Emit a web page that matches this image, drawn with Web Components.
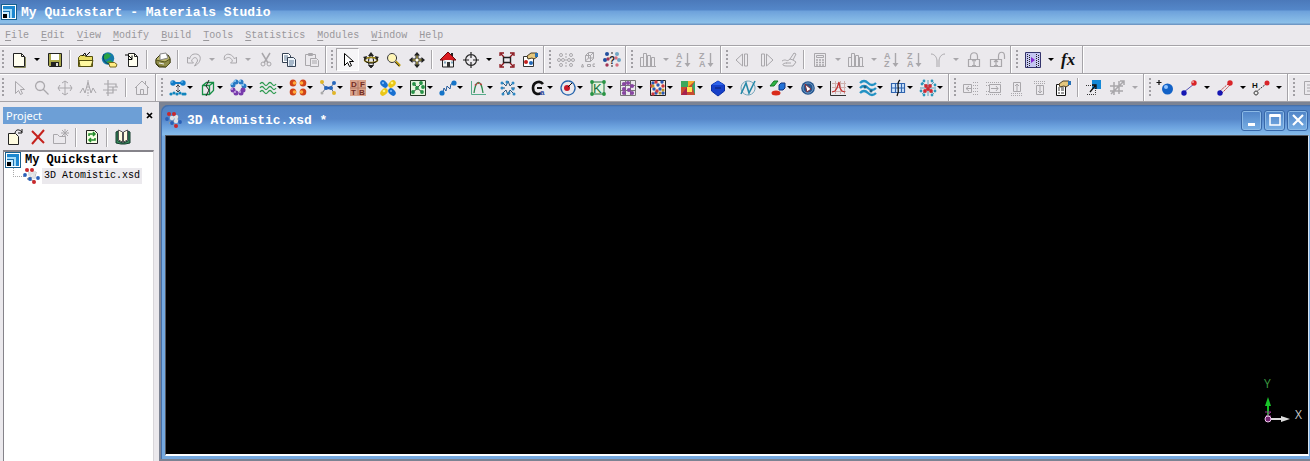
<!DOCTYPE html>
<html lang="en">
<head>
<meta charset="utf-8">
<title>My Quickstart - Materials Studio</title>
<style>
html,body{margin:0;height:100%}
body{background:#ebe9ed;font-family:"Liberation Mono",monospace;font-size:10px;overflow:hidden}
</style>
</head>
<body>
<studio-app></studio-app>
<script>
const dot=(x,y,r,c)=>`<circle cx="${x}" cy="${y}" r="${r}" fill="${c}"/>`;
const dots=(pts,r,c)=>pts.map(p=>dot(p[0],p[1],r,c)).join('');
const line=(d,c='#000',w=1,x='')=>`<path d="${d}" fill="none" stroke="${c}" stroke-width="${w}" ${x}/>`;
const fill=(d,c,s='none')=>`<path d="${d}" fill="${c}" stroke="${s}"/>`;
const letter=(t,x,y,size,c,style='font-weight:bold')=>`<text x="${x}" y="${y}" fill="${c}" style="font-family:'Liberation Sans',sans-serif;font-size:${size}px;${style}">${t}</text>`;
const G='#a9a7ab';
const pageShape='M2.5 1.5h8l3 3v10h-11z';
const icons={
 logo:fill('M0 0h16v16H0z','#17608f')+fill('M1 1h14v14H1z','#fff')+fill('M2 2h12v12H2z','#1d87cf')+fill('M2 5h9v9H9V7H2z','#a5dcf8')+fill('M2 7h7v7H2z','#1b6fae')+fill('M2 8h6v6H2z','#cceeff')+fill('M2 10h4v4H2z','#000'),
 page:fill(pageShape,'#fffef0','#222')+line('M10.5 1.5v3h3','#222')+line('M3 15.5h11.5V5','#8a8a60'),
 save:fill('M1.5 1.5h13v13h-12l-1-1z','#aaa84c','#222')+fill('M4 2h8v6H4z','#fff')+fill('M4 10h8v4H4z','#222')+fill('M9 11h2v3H9z','#ddd'),
 folder:fill('M.5 5.5l2-2h4l1 1h7v10h-14z','#e9dd62','#55500f')+fill('M1 8.5h14l-2 6H2z','#fff8a0','#55500f')+line('M4 4l3-3 1 3 4-4','#111'),
 globe:dot(7,6.5,6.2,'#157aa9')+fill('M2 4l4-3 4 2-2 3-4 2z','#29a343')+fill('M5 10l4-2 3 2-5 2z','#29a343')+fill('M7.500 10.500h6l2.500 2-1 2.500h-6z','#ffec83','#76681d')+line('M3 2a7 7 0 0 0 5 10','#073c62'),
 import:fill('M4.500 1.500h6l3 3v10h-9z','#fffef0','#222')+line('M1 3h3l4 4M8 3.500v4H4','#000')+line('M10.500 1.500v3h3','#222'),
 print:fill('M1 7l4-4h8l2 3v5l-4 4H4l-3-3z','#bbb66a','#33320e')+fill('M5 2l6-1 2 5-8 2z','#fff','#888')+fill('M1 8l9 2 5-3v4l-4 4-7-1-3-3z','#918e4b','#55531f')+line('M4 11l5 1','#eee'),
 undo:line('M1.500 5v6h6l-2-2c2-5 6-4 6 0l-3 5c7-3 8-12 1-12-4 0-5 2-6 5z',G),
 redo:line('M14.500 5v6h-6l2-2c-2-5-6-4-8-1-2-7 7-8 10-1z',G),
 cut:line('M4 1l6 10M12 1L6 11M8 7l1 2',G,1.500)+line('M5 10a2 2 0 1 0 0 4 2 2 0 0 0 0-4M11 10a2 2 0 1 0 0 4 2 2 0 0 0 0-4',G),
 copy:fill('M1.500 1.500h6l2 2v7h-8z','#fff','#344153')+line('M3 4h4M3 6h4M3 8h4','#5e7995')+fill('M6.500 5.500h6l2 2v7h-8z','#eef5fc','#344153')+line('M8 9h5M8 11h5M8 13h4','#5e7995'),
 paste:line('M7 13.500H1.500v-11h10V6M4.500 3.500v-2h4v2zM6.500 6.500h6l2 2v6h-8zM8 9h5M8 11h5',G),
 pointer:fill('M4.500 1.500v12l3-3 2 4 2-1-2-4h4z','#fff','#000'),
 pointerOff:line('M4.500 1.500v12l3-3 2 4 2-1-2-4h4z',G),
 rotate:line('M8 3.500a2.500 6 0 1 0 .1 0','#111')+line('M8 5.500a6.500 2.500 0 1 0 .1 0','#9b8510',1.500)+line('M2 5.500c-2 3 2 6 6 5.500M14 5.500c2 3-2 6-6 5.500','#111')+fill('M8 0l3 4H5zM0 5l4-1-1 4zM16 5l-4-1 1 4zM8 16l3-3H5z','#222'),
 zoom:dot(6,6,4,'#fff5b5')+line('M6 1.500a4.500 4.500 0 1 0 .1 0','#333')+line('M9.500 9.500l4.500 4.500','#b9990b',2.500)+line('M9 10l4 4','#333'),
 zoomOff:line('M6 1.500a4.500 4.500 0 1 0 .1 0M9.500 9.500l5 5',G,1.300),
 move:line('M8 2v12M2 8h12','#222',3)+line('M8 3v10M3 8h10','#e5d25b',1)+fill('M8 0l3 3.500H5zM8 16l3-3.500H5zM0 8l3.500-3v6zM16 8l-3.500-3v6z','#222')+dot(8,8,1.500,'#fff'),
 moveOff:line('M8 1v14M1 8h14M5 3l3-2 3 2M5 13l3 2 3-2M3 5L1 8l2 3M13 5l2 3-2 3',G),
 home:fill('M2.500 7L8 2l5.500 5v8h-11z','#f2f2f2','#222')+fill('M11 1h2v5h-2z','#222')+fill('M0 8l8-8 8 8H13L8 7 3 8z','#dc1a20','#6a080c')+fill('M3 6h10v2H3z','#d51a20')+fill('M7 10h3v5H7z','#333')+fill('M4 9.500h2v2H4zM11 9.500h2v2h-2z','#7fa4bb'),
 homeOff:line('M1 8l7-7 7 7M2.500 7v7.500h11V7M6.500 14V9.500h3V14M11.500 1v4',G),
 target:line('M8 2.500a5.500 5.500 0 1 0 .1 0M8 0v6M8 10v6M0 8h6M10 8h6','#222',1.200),
 fit:line('M4.500 5.500h7v5h-7z','#222',1.400)+line('M1 4V1h4M11 1h4v3M15 12v3h-4M5 15H1v-3M2 2l3 3M14 2l-3 3M2 14l3-3M14 14l-3-3','#8b151b',1.300),
 display:fill('M1.500 4.500h10v10h-10z','#fff','#333')+fill('M5 4l4-3h6v4l-3 2-2-1-4 1z','#e5c77d','#4b3d25')+fill('M13 1h3v4h-3z','#2670b5')+dot(4,10,2,'#c3221e')+dot(9,11,2,'#2368b7'),
 props:fill('M1.500 4.500h9v11h-9z','#fff','#111')+line('M3 8h2M6 8h3M3 10h2M6 10h3M3 13h2M6 13h3','#333')+fill('M4 4l4-3h6v4l-3 2-2-1-4 1z','#e5c77d','#4b3d25')+fill('M13 1h3v4h-3z','#2670b5'),
 symOff:line('M8 1v14',G,1,'stroke-dasharray="2 1"')+[[3,3],[3,13],[13,3],[13,13],[1,8],[5,8],[11,8],[15,8]].map(p=>`<circle cx="${p[0]}" cy="${p[1]}" r="1.500" fill="none" stroke="${G}"/>`).join(''),
 cubeOff:line('M4.500 3.500l3-3h5v6l-3 3h-5zM4.500 3.500h5v6M9.500 3.500l3-3M7.500 1v5h5M7.500 6l-3 3',G)+line('M1.500 12l1 3h-2zM6.500 12.500h3v2h-3zM14 12h-2v2.500h2',G),
 symHelp:line('M8 0v3M8 13v3','#222',1,'stroke-dasharray="2 1"')+letter('?',5,12,10,'#222')+dots([[3,2],[1,8]],2,'#204e9d')+dots([[3,13],[4,7]],1.700,'#a23555')+dots([[13,2],[15,8]],2,'#70a6c5')+dots([[13,13],[12,6]],1.700,'#d66e7c'),
 chartOff:line('M.5 14.500v-9h3v9M3.500 6V1.500h3v13M7.500 14V3.500h3v11M11.500 14V5.500h3v9M0 14.500h16',G),
 azOff:letter('A',0,7,9,G)+letter('Z',0,15,9,G)+line('M11.500 1v13',G,1.400)+fill('M8.500 11h6l-3 4z',G),
 zaOff:letter('Z',0,7,9,G)+letter('A',0,15,9,G)+line('M11.500 1v13',G,1.400)+fill('M8.500 11h6l-3 4z',G),
 prevOff:line('M7.500 2v12L1 8zM9.500 2v12h3V2z',G),
 nextOff:line('M3.500 2v12h3V2zM8.500 2v12L15 8z',G),
 handOff:line('M1 9c5-3 4 2 8-2l4-6 2 1-3 6 3 2-3 4H6c-6 0-5-3 0-3M9 7l3 1M5 11h5',G),
 calcOff:line('M2.500 1.500h11v13h-11zM4.500 3.500h7v2h-7z',G)+line('M4 8h8M4 10.500h8M4 13h8',G,1.500,'stroke-dasharray="2 1"'),
 yOff:line('M1 2c4 0 6 4 6 7v6M15 2c-4 0-6 4-6 7v6',G),
 lockOff:line('M4.500 7V4.500c0-5 7-5 7 0V7M2.500 7.500h11v7h-11zM6 9l2-1 2 1M8 9v5M6 13.500h4',G,1.200),
 unlockOff:line('M9.500 7V4c0-5 6-5 6 0v3M1.500 7.500h11v7h-11zM5 10l2-2 2 2M7 9v5M5 13.500h4',G,1.200),
 movie:fill('M.5 .5h15v15H.5z','#c4c6f2','#34346c')+line('M2.500 2v13M4.500 3v12M11.500 2v13M13.500 3v12','#222',1,'stroke-dasharray="1 1"')+fill('M6 5l4 3-4 3z','#8127d0'),
 fx:letter('fx',0,13,17,'#111','font-family:\'Liberation Serif\',serif;font-style:italic;font-weight:bold'),
 leftOff:line('M.5 4.500h8v8h-8zM9 8.500H3M6 6L3 8.500 6 11',G)+line('M10 2.500h6M10 5.500h6M10 8.500h6M10 11.500h6M10 14.500h6',G,1,'stroke-dasharray="1 1"'),
 rightOff:line('M3.500 4.500h11v8h-11zM5 8.500h7M10 6l2 2.500-2 2.500',G)+line('M0 2.500h16M0 14.500h16M0 5.500h3M0 11.500h3',G,1,'stroke-dasharray="1 1"'),
 upOff:line('M4.500 2.500h7v9h-7zM8 11V4M6 6l2-2 2 2',G)+line('M2 13.500h12M2 15.500h12',G,1,'stroke-dasharray="1 1"'),
 downOff:line('M4.500 5.500h7v9h-7zM8 6v7M6 11l2 2 2-2',G)+line('M2 1.500h12M2 3.500h12',G,1,'stroke-dasharray="1 1"'),
 spikeOff:line('M0 13l3-5 2 5 3-11 3 11 2-5 3 5',G)+line('M8 0v16',G,1,'stroke-dasharray="2 1"'),
 alignOff:line('M5 0v16M1 4h12v3H5M0 10h14M3 13h7V7h5',G,1.200),
 scale:fill('M6 0h9v9H6z','#1488d7')+line('M0 5.500h9.500v9H0','#333',1,'stroke-dasharray="1 1"')+line('M4 12l5-6M6 5h4v4','#111',1.300),
 netOff:line('M5 2v13M10 1v13M1 6h13M1 11h13M2 14L15 1M11 1h4v4',G,1.500),
 atomAdd:dot(9.500,9,5.500,'#1262c7')+dot(8,7,2,'#93c4ff')+line('M1 0v5M-1.500 2.500h5','#111',1.200),
 bond:line('M3 12L13 4','#5754b7')+dot(13,3,2.700,'#d92529')+dot(3,13,2.700,'#1617b3')+dot(12,2,.8,'#fff'),
 bond2:line('M3 11L11 4M5 13l8-8','#bc3b3b',1,'stroke-dasharray="2 1"')+dot(13,3,2.700,'#d92529')+dot(3,13,2.700,'#1617b3'),
 bondH:line('M3 12L13 4','#333',1,'stroke-dasharray="2 1"')+letter('H',-1,8,8,'#111')+dot(14,3,2.500,'#d92529')+dot(3,13,2,'#eee')+line('M3 11a2 2 0 1 0 .1 0','#333'),
 listOff:line('M2.500 1.500h10v13h-10zM5 5h6M5 8h6M5 11h6',G),
 link:line('M3 3h10','#127bc7',2)+line('M8 4v8','#686878')+line('M6 7l2-2 2 2M6 10l2 2 2-2','#444')+dots([[3,3],[13,3]],2.700,'#127bc7')+dots([[1,14],[4,13],[7,14],[10,13],[13,14],[15,14]],1.600,'#1385bd')+dots([[2,2],[12,2]],.7,'#a3e0ff'),
 cell:line('M2.500 5.500l4-3h7v8l-4 4h-7zM2.500 5.500h7v9M9.500 5.500l4-3','#168e45',1.300)+line('M9 0L6 6l3 4-3 6','#222'),
 ring:dots([[3,5],[6,2],[11,2],[14,6]],2.500,'#2879c4')+dots([[3,10],[6,13],[11,13],[13,10]],2.500,'#783bac')+dots([[2,4],[5,1],[10,1],[13,5]],.9,'#a3e0ff')+dots([[2,9],[5,12],[10,12]],.9,'#d9b8f2'),
 waves:[4,8,12].map(y=>line(`M0 ${y}q2-3 4 0t4 0 4 0 4 0`,'#2e9a50',1.300)).join(''),
 lobes:[[3,3],[3,12],[13,3],[13,12]].map(p=>`<ellipse cx="${p[0]}" cy="${p[1]}" rx="3.300" ry="3.600" fill="#cf4218"/>`).join('')+dots([[4.5,3],[4.5,12],[11.500,3],[11.500,12]],1.800,'#ffac3c'),
 chain:line('M2 3l4 5M11 7l3-4M6 8l-4 5M11 8l3 5','#6b7180')+line('M5 8h6','#2352a8',2.500)+dots([[2,2],[14,13]],2,'#e1b528')+dots([[6,8],[11,8],[14,3]],2,'#2566bb')+dot(2,13,1.500,'#aaa'),
 dftb:fill('M0 0h16v16H0z','#d9a38b')+line('M8 1v14M0 8h16','#b37a66')+letter('D',1,7,8,'#722d25')+letter('F',10,7,8,'#722d25')+letter('T',1,15,8,'#722d25')+letter('B',9,15,8,'#722d25'),
 lobes2:[[4,4,'#1970d1',45],[12,12,'#1970d1',45],[12,4,'#ebc617',-45],[4,12,'#ebc617',-45]].map(p=>`<ellipse cx="${p[0]}" cy="${p[1]}" rx="4.300" ry="3" fill="${p[2]}" transform="rotate(${p[3]} ${p[0]} ${p[1]})"/>`).join('')+dots([[12,3],[4,11]],1.300,'#fff47d')+dots([[3,3],[11,11]],1,'#86c2ff'),
 greenbox:fill('M.5 .5h15v15H.5z','#e6f4df','#263b27')+line('M4 4l4 4-5 4M12 3l-5 5 5 4','#444')+dots([[4,4],[11,3],[7,8],[3,12],[12,12],[13,7]],1.900,'#269347'),
 zig:line('M3 12l1-4 2 3 1-5 3 3 1-5 3-1','#245b9c')+dots([[2,13],[14,3]],2.600,'#1574c8'),
 curve:line('M1.500 1v13.500H16','#55aa8a')+line('M4 13c2-14 7-14 9 0','#2b8b4c',1.300)+line('M5 5.500c2-3 5-3 7 0','#c34040',1.500,'stroke-dasharray="2 1"'),
 bluegrid:line('M2 2l4 4 2-5 2 5 4-4M2 14l4-4 2 5 2-5 4 4M1 8h4M11 8h4','#27547b')+dots([[2,3],[7,2],[13,3],[2,8],[13,9],[3,14],[9,13],[14,14]],1.500,'#2d87c3'),
 g:line('M13 4c-3-4-10-2-10 4s5 7 8 5','#111',2.600)+line('M7 8h5','#111',2)+letter('a',10,15,8,'#324ba1'),
 orbit:line('M8 1a7 7 0 1 0 .1 0','#2765ad',1.300)+dot(7,8,3,'#c71828')+line('M8 7l4-4','#111'),
 k:fill('M2 2h12v12H2z','#e4f4df','#23773e')+letter('K',3,13,13,'#16723b','')+dots([[2,2],[14,2],[2,14],[14,14]],1.900,'#279443'),
 purple:line('M.5 .5h15v15H.5zM5.500 1v14M10.500 1v14M1 5.500h14M1 10.500h14','#777')+dots([[4,4],[8,3],[12,6],[4,9],[9,10],[4,13],[12,13]],2.100,'#8846a2'),
 mosaic:fill('M.5 .5h15v15H.5z','#f8eadf','#222')+dots([[3,3],[8,5],[12,2],[4,9],[10,9],[13,13],[6,13]],1.700,'#285ab6')+dots([[6,2],[13,6],[7,11],[3,14],[1.500,6]],1.700,'#c9383f')+dots([[3,6],[10,13],[13,10]],1.500,'#b99328'),
 prism:fill('M1 1h14v14H1z','#c84b31')+fill('M1 1h7v6H1z','#3ca85d')+fill('M8 1h7L8 7z','#f4b02d')+fill('M7 7h5v5H7z','#ffe352')+fill('M1 15l6-8v8z','#a6224d')+fill('M12 6l3-5v14z','#36a96d'),
 poly:fill('M8 1l6.500 4v6L8 16l-6.500-5V5z','#1740c9','#0a2fa5')+fill('M8 1l6 4H2z','#2d62ea')+line('M5 8h6','#102b8b',1.500),
 n:line('M8 1a7 7 0 1 0 .1 0','#72a5bb')+line('M1 14l5-11 3 10 6-12','#2588a8',1.600),
 shapes:fill('M0 6l4-5h4L4 6z','#2fb744','#167628')+fill('M9 5l2-2h4v5l-2 2H9z','#2372d7','#14347e')+'<ellipse cx="6" cy="13" rx="4.500" ry="2.500" fill="#d92b1b"/>',
 compass:dot(8,8,6.800,'#25558e')+line('M8 3a5 5 0 1 0 .1 0','#7da5cd')+fill('M5 4l6 5-4 3z','#fff','#802b34'),
 peak:line('M2 3.500h14M2 7.500h14M2 11.500h14M5.500 1v13M10.500 1v13M14.500 1v13','#ceb1ae')+line('M.5 1v14.500h15.500','#333')+line('M2 12l3-1 2-3 2-6 1 6 2 3 3 1','#c33030',1.300),
 streams:[3,8,13].map(y=>line(`M0 ${y}q4-4 8 0t8 0`,'#2392c4',2.300)).join('')+dots([[5,7],[11,11]],1.500,'#206080'),
 grid:fill('M1 3h14v10H1z','#d3e8ff')+line('M1.500 3.500h13v9h-13zM5.500 3v10M11.500 3v10M1 8h14','#3164ae',1.200)+line('M10 0c-5 4 1 8-3 16','#111',1.300),
 burst:line('M2 2l12 12M14 2L2 14M8 0v16M0 8h16','#5aa3bd')+dots([[2,4],[4,1],[12,1],[15,5],[1,11],[4,15],[12,15],[15,11]],1.400,'#2a97bb')+dots([[6,6],[10,6],[8,9],[5,11],[11,11]],1.900,'#cf2932'),
 del:line('M2 2l12 12M14 1L2 15','#c5221d',2),
 newPage:fill('M1.500 4.500h7l3 3v8h-10z','#fffce0','#222')+line('M8 4c1-4 4-4 7-1M15 0v4h-4','#111'),
 folderOff:line('M.5 5.500h4l2 2h6v7H.5zM12 0v8M8 4h8M9 1l6 6M15 1L9 7',G),
 refresh:fill(pageShape,'#f4ffe4','#222')+line('M5 7V5h5M9 3l2 2-2 2M11 9v2H6M7 9l-2 2 2 2','#218c29',1.500),
 book:fill('M1 3l2-1v10l5 2 5-2V2l2 1v11l-5 1H6l-5-1z','#358a5c','#173b2d')+fill('M3.500 1l4 2v10l-4-2z','#fffde0','#555')+fill('M12.500 1l-4 2v10l4-2z','#fffde0','#555'),
 molecule:line('M2 2l5 4 5-2-1 6-5-1-3 2 8 2','#999')+dots([[6,6],[10,5],[10,9]],2.200,'#dfe1e4')+dots([[3,2],[8,2],[10,14]],2,'#c9282c')+dots([[1,7],[14,10],[6,11]],1.900,'#2a60b8'),
 min:fill('M4 11h7v3H4z','#fff'),
 max:line('M3 3.500h10v9.500H3z','#fff',1.500)+line('M2.500 3.500h11','#fff',3),
 close:line('M3 3l10 10M13 3L3 13','#fff',2.200)
};
const define=(name,markup,setup)=>customElements.define(name,class extends HTMLElement{
  connectedCallback(){
    if(this.shadowRoot)return;
    const t=document.createElement('template');
    t.innerHTML=markup;
    const content=t.content.cloneNode(true);
    if(setup)setup(this,content);
    this.attachShadow({mode:'open'}).append(content);
  }
});
define('ms-icon',`<style>:host{display:block;width:16px;height:16px}svg{display:block;width:16px;height:16px;margin:auto;overflow:visible}</style><svg viewBox="0 0 16 16" aria-hidden="true"></svg>`,
 (el,r)=>{r.querySelector('svg').innerHTML=icons[el.getAttribute('name')]||''});
define('tool-button',`<style>
:host{display:block;flex:none;width:23px}
button{box-sizing:border-box;width:100%;height:23px;padding:0;border:1px solid transparent;background:none;display:flex;align-items:center;justify-content:center}
:host([pressed]) button{border-color:#aaa8ac #fff #fff #aaa8ac;background:#f6f5f7}
:host([menu]){width:30px}
:host([menu]) button{justify-content:flex-start;padding-left:2px}
i{display:none;border:3px solid transparent;border-top-color:#000;border-bottom:0}
:host([menu]) i{display:block}
ms-icon{flex:none}
:host([menu]) ms-icon{width:18px}
</style><button><ms-icon></ms-icon><i></i></button>`,(el,r)=>{
 const n=el.getAttribute('name'),b=r.querySelector('button');
 r.querySelector('ms-icon').setAttribute('name',n);
 b.setAttribute('aria-label',n.replace('Off',''));
 if(n.endsWith('Off')||n=='undo'||n=='redo'||n=='cut'||n=='paste')b.disabled=true;
});
define('drop-arrow',`<style>:host{display:block;flex:none;width:13px}button{display:flex;align-items:center;justify-content:center;width:100%;height:23px;padding:0;border:0;background:none}i{border:3px solid transparent;border-top-color:#000;border-bottom:0}:host([off]) i{border-top-color:#a9a7ab}</style><button aria-label="More options"><i></i></button>`);
define('tool-separator',`<style>:host{display:block;flex:none;box-sizing:border-box;width:8px;height:19px;padding:0 3px}i{display:block;height:100%;width:1px;background:#a9a7ab;box-shadow:1px 0 #fff}</style><i></i>`);
define('tool-group',`<style>
:host{display:flex;flex:none;align-items:center;height:27px;padding-right:2px;border-right:1px solid #a5a3a8;box-shadow:1px 0 #fff;margin-right:1px}
.grip{flex:none;width:9px;height:19px;background:repeating-linear-gradient(#a19fa4 0 2px,transparent 2px 4px) 4px 0/2px 100% no-repeat}
:host([first]) .grip{width:7px;background-position:2px 0}
</style><span class="grip"></span><slot></slot>`);
define('tool-row',`<style>:host{display:flex;overflow:hidden;border-top:1px solid #a5a3a8;height:27px;background:linear-gradient(#fff,#fff) 0 0/100% 1px no-repeat}</style><slot></slot>`);
define('title-bar',`<style>
:host{display:flex;align-items:center;gap:4px;box-sizing:border-box;height:25px;padding:0 0 1px 1px;color:#fff;font-weight:bold;font-size:13px;line-height:16px;background:linear-gradient(#4b79ba 0,#5487c9 10px,#6da1db 11px,#8cc0e9 23px,#6f98c5 24px,#6f98c5)}
h1{margin:0;padding-top:1px;font:inherit;white-space:pre}
</style><ms-icon name="logo"></ms-icon><h1><slot></slot></h1>`);
define('menu-bar',`<style>
nav{display:flex;gap:12px;height:20px;align-items:center;padding:2px 0 0 5px;box-sizing:border-box}
button{font:inherit;color:#99979b;padding:0;border:0;background:none;line-height:12px}
u{text-underline-offset:2px}
</style><nav></nav>`,(el,r)=>{
 r.querySelector('nav').innerHTML='File Edit View Modify Build Tools Statistics Modules Window Help'.split(' ').map(w=>`<button><u>${w[0]}</u>${w.slice(1)}</button>`).join('');
});
define('project-panel',`<style>
:host{display:flex;flex-direction:column;flex:none;box-sizing:border-box;width:159px;padding:5px 4px 0 3px}
header{display:flex;align-items:center;gap:2px}
h2{flex:1;margin:0;padding-left:3px;font:11px/17px "Noto Sans",sans-serif;color:#fff;background:#6d9fd6}
header button{flex:none;width:11px;height:16px;padding:0;border:0;background:none}
svg{display:block;margin:auto}
.tools{display:flex;align-items:center;height:26px}
ul{list-style:none;box-sizing:border-box;flex:1;margin:0 1px 0 0;padding:0 0 0 1px;background:#fff;border:solid #85838a;border-width:2px 1px 0 1px;border-right-color:#d8d6da}
ul ul{border:0;padding:0 0 0 8px;margin:0}
.node{display:flex;align-items:center;height:16px}
.root{gap:4px;font-size:12px;font-weight:bold}
.branch{flex:none;width:10px;height:8px;align-self:flex-start;border:dotted #aaa;border-width:0 0 1px 1px}
.label{background:#ebe9ed;line-height:16px;padding:0 2px;margin-left:2px}
</style><header><h2>Project</h2><button aria-label="Close"><svg width="8" height="8" viewBox="0 0 8 8"><path d="M1 1l5 5M6 1L1 6" stroke="#000" stroke-width="1.700"/></svg></button></header>
<div class="tools"><tool-button name="newPage"></tool-button><tool-button name="del"></tool-button><tool-button name="folderOff"></tool-button><tool-separator></tool-separator><tool-button name="refresh"></tool-button><tool-separator></tool-separator><tool-button name="book"></tool-button></div>
<ul><li><div class="node root"><ms-icon name="logo"></ms-icon><span>My Quickstart</span></div><ul><li class="node"><i class="branch"></i><ms-icon name="molecule"></ms-icon><span class="label">3D Atomistic.xsd</span></li></ul></li></ul>`);
define('document-window',`<style>
:host{display:flex;flex-direction:column;flex:1;min-width:0;box-sizing:border-box;border:solid #7c8393;border-width:3px 0 2px 2px;background:#7c8393}
.frame{display:flex;flex-direction:column;flex:1;box-sizing:border-box;padding:0 0 3px 4px;border-radius:7px 0 0 0;background:linear-gradient(#3f6db1,#5384c5 2px,#5687ca 14px,#6da3df 22px,#86bcea 30px,#74a8df 31px);box-shadow:inset 1px 1px #4670aa}
header{display:flex;align-items:center;gap:5px;height:30px;padding:0 2px 0 1px;color:#fff;font-weight:bold;font-size:13px}
h2{font:inherit;line-height:16px;margin:0;padding-top:2px;flex:1}
.controls{display:flex;gap:2px}
.controls button{display:flex;align-items:center;justify-content:center;box-sizing:border-box;width:21px;height:21px;padding:0;border:1px solid #3868a9;border-radius:3px;background:linear-gradient(#4f83c7,#78afe4);box-shadow:inset 0 0 0 1px #8cbae6}
.view{position:relative;flex:1;background:#000;border:1px solid #55585f;border-bottom:2px solid #fff;border-right-color:#dce5ee;margin-right:1px}
.axes{position:absolute;right:0;bottom:26px;width:50px;height:60px;font:12px "Open Sans",sans-serif}
</style><div class="frame"><header><ms-icon name="molecule"></ms-icon><h2>3D Atomistic.xsd *</h2><div class="controls"><button aria-label="Minimize"><ms-icon name="min"></ms-icon></button><button aria-label="Maximize"><ms-icon name="max"></ms-icon></button><button aria-label="Close"><ms-icon name="close"></ms-icon></button></div></header>
<div class="view"><svg class="axes" viewBox="0 0 50 60"><text x="6" y="20" fill="#3d9a42">Y</text><text x="37" y="51" fill="#c8c8c8">X</text><path d="M10 50V35" stroke="#13bd21" stroke-width="2"/><path d="M10 29l3 9H7z" fill="#19c52a"/><path d="M12 51h12" stroke="#ddd" stroke-width="2"/><path d="M32 51l-9-3v6z" fill="#ddd"/><path d="M7 44h6l-5 4h5" fill="none" stroke="#9c3495"/><circle cx="10" cy="51" r="3" fill="#70216d" stroke="#f0c8ef"/></svg></div></div>`);
const expand=s=>s.split(' ').map(x=>x=='|'?'<tool-separator></tool-separator>':x=='v'?'<drop-arrow></drop-arrow>':x=='-v'?'<drop-arrow off></drop-arrow>':`<tool-button name="${x.replace(/[*!]/,'')}"${x.endsWith('*')?' menu':''}${x.endsWith('!')?' pressed':''}></tool-button>`).join('');
const row=gs=>`<tool-row>${gs.map((g,i)=>`<tool-group${i?'':' first'}>${expand(g)}</tool-group>`).join('')}</tool-row>`;
define('studio-app',`<style>
:host{display:flex;flex-direction:column;min-height:100vh;background:#ebe9ed}
main{display:flex;flex:1;min-height:0;border-top:1px solid #a5a3a8}
</style><title-bar>My Quickstart - Materials Studio</title-bar><menu-bar></menu-bar>
${row(['page v save | folder globe import | print | undo -v redo -v cut copy paste','pointer! rotate zoom move | home target v fit display','symOff cubeOff symHelp','chartOff -v azOff zaOff','prevOff nextOff handOff | calcOff -v chartOff -v azOff zaOff yOff -v lockOff unlockOff','movie v fx'])}
${row(['pointerOff zoomOff moveOff spikeOff alignOff | homeOff','link* cell* ring* waves* lobes* chain* dftb* lobes2* greenbox* zig* curve* bluegrid* g* orbit* k* purple* mosaic* prism* poly* n* shapes* compass* peak* streams* grid* burst*','leftOff rightOff upOff downOff props | scale netOff -v','atomAdd bond v bond2 v bondH v','listOff'])}
<main><project-panel></project-panel><document-window></document-window></main>`);
</script>
</body>
</html>
